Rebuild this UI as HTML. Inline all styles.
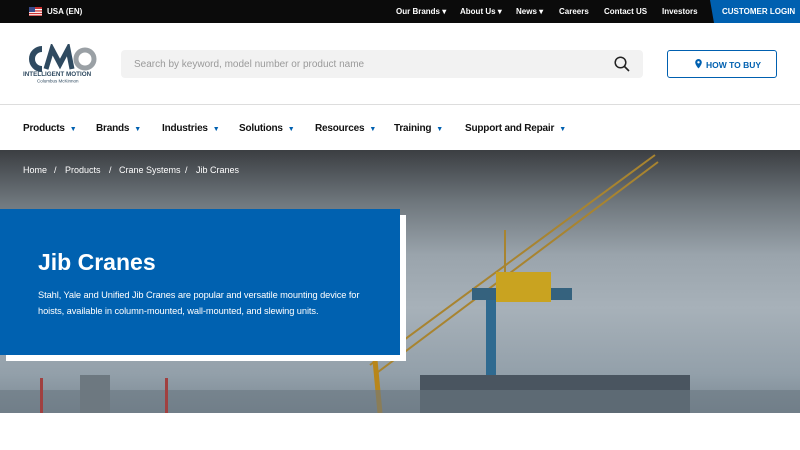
<!DOCTYPE html>
<html><head><meta charset="utf-8"><style>
*{margin:0;padding:0;box-sizing:border-box}
body{width:800px;height:450px;overflow:hidden;background:#fff;font-family:"Liberation Sans",Arial,sans-serif;position:relative}
.top{position:absolute;left:0;top:0;width:800px;height:23px;background:#0b0b0b;color:#fff;font-size:8px;font-weight:bold}
.top span{position:absolute;top:7px}
.login{position:absolute;right:0;top:0;width:96px;height:23px;background:#0060b0;clip-path:polygon(6px 0,100% 0,100% 100%,10px 100%)}
.search{position:absolute;left:121px;top:50px;width:522px;height:28px;background:#f2f2f2;border-radius:4px;color:#9a9a9a;font-size:10px;padding:9px 0 0 13px}
.htb{position:absolute;left:667px;top:50px;width:110px;height:28px;border:1px solid #0060b0;border-radius:3px;color:#0060b0;font-size:8.5px;font-weight:bold;padding:9px 0 0 38px}
.nav{position:absolute;top:104px;left:0;width:800px;height:47px;border-top:1px solid #ddd}
.nav span{position:absolute;top:18px;font-size:10px;font-weight:bold;color:#111;letter-spacing:-.2px}
.nav i{font-style:normal;color:#0060b0;font-size:7px;margin-left:5px}
.hero{position:absolute;top:150px;left:0;width:800px;height:263px;background:linear-gradient(#3b3e42 0%,#6f777d 20%,#9aa4ac 40%,#a7b1b9 60%,#93a0aa 85%,#7a8893 100%);overflow:hidden}
.bc span{position:absolute;top:165px;color:#fff;font-size:9px;white-space:nowrap}
.shadow{position:absolute;left:6px;top:215px;width:400px;height:146px;background:#fff}
.box{position:absolute;left:0;top:209px;width:400px;height:146px;background:#0061b0;color:#fff}
.box h1{position:absolute;left:38px;top:40px;font-size:23px;font-weight:bold}
.box p{position:absolute;left:38px;top:79px;width:322px;font-size:9.3px;line-height:15.5px;letter-spacing:-.1px}
</style></head><body>
<div class="top">
<svg style="position:absolute;left:29px;top:7px" width="13" height="9"><rect width="13" height="9" fill="#c33"/><rect y="2" width="13" height="1.3" fill="#fff"/><rect y="4.6" width="13" height="1.3" fill="#fff"/><rect y="7.2" width="13" height="1" fill="#fff"/><rect width="6" height="5" fill="#3a4a8a"/></svg>
<span style="left:47px">USA (EN)</span>
<span style="left:396px">Our Brands ▾</span><span style="left:460px">About Us ▾</span><span style="left:516px">News ▾</span><span style="left:559px">Careers</span><span style="left:604px">Contact US</span><span style="left:662px">Investors</span>
<div class="login"></div><span style="left:722px">CUSTOMER LOGIN</span>
</div>
<svg style="position:absolute;left:22px;top:44px" width="76" height="40">
<path d="M20 5 A10 10 0 1 0 20 25" fill="none" stroke="#2f4a60" stroke-width="6"/>
<path d="M24 25 L30 5 L38 20 L46 5 L50 25" fill="none" stroke="#2f4a60" stroke-width="5"/>
<circle cx="63" cy="15" r="9" fill="none" stroke="#9aa0a5" stroke-width="5"/>
<text x="1" y="32" font-size="6.3" font-weight="bold" fill="#2f4a60">INTELLIGENT MOTION</text>
<text x="15" y="38.5" font-size="4.5" fill="#2f4a60">Columbus McKinnon</text>
</svg>
<div class="search">Search by keyword, model number or product name
<svg style="position:absolute;right:13px;top:6px" width="16" height="16"><circle cx="6.5" cy="6.5" r="5.3" fill="none" stroke="#222" stroke-width="1.5"/><line x1="10.5" y1="10.5" x2="15" y2="15" stroke="#222" stroke-width="1.6"/></svg></div>
<div class="htb"><svg style="position:absolute;left:27px;top:8px" width="7" height="10"><path d="M3.5 0a3.3 3.3 0 0 1 3.3 3.3C6.8 6 3.5 9.5 3.5 9.5S.2 6 .2 3.3A3.3 3.3 0 0 1 3.5 0z" fill="#0060b0"/><circle cx="3.5" cy="3.3" r="1.2" fill="#fff"/></svg>HOW TO BUY</div>
<div class="nav">
<span style="left:23px">Products<i>▼</i></span><span style="left:96px">Brands<i>▼</i></span><span style="left:162px">Industries<i>▼</i></span><span style="left:239px">Solutions<i>▼</i></span><span style="left:315px">Resources<i>▼</i></span><span style="left:394px">Training<i>▼</i></span><span style="left:465px">Support and Repair<i>▼</i></span>
</div>
<div class="hero">
<svg width="800" height="263">
<g stroke="#a88430" stroke-width="2" fill="none">
<line x1="370" y1="215" x2="655" y2="5"/><line x1="378" y1="222" x2="658" y2="12"/>
<line x1="505" y1="80" x2="505" y2="125"/>
</g>
<line x1="375" y1="210" x2="380" y2="263" stroke="#b8861a" stroke-width="5"/>
<rect x="486" y="150" width="10" height="113" fill="#2f6a90"/>
<rect x="472" y="138" width="100" height="12" fill="#35627e"/>
<rect x="496" y="122" width="55" height="30" fill="#c9a320"/>
<rect x="420" y="225" width="270" height="38" fill="#4a5560"/>
<rect x="0" y="240" width="800" height="23" fill="#6a7882" opacity=".6"/>
<rect x="40" y="228" width="3" height="35" fill="#a04040"/><rect x="165" y="228" width="3" height="35" fill="#a04040"/>
<rect x="80" y="225" width="30" height="38" fill="#6d7880"/>
</svg>
</div>
<div class="bc"><span style="left:23px">Home</span><span style="left:54px">/</span><span style="left:65px">Products</span><span style="left:109px">/</span><span style="left:119px">Crane Systems</span><span style="left:185px">/</span><span style="left:196px">Jib Cranes</span></div>
<div class="shadow"></div>
<div class="box"><h1>Jib Cranes</h1><p>Stahl, Yale and Unified Jib Cranes are popular and versatile mounting device for hoists, available in column-mounted, wall-mounted, and slewing units.</p></div>
</body></html>
